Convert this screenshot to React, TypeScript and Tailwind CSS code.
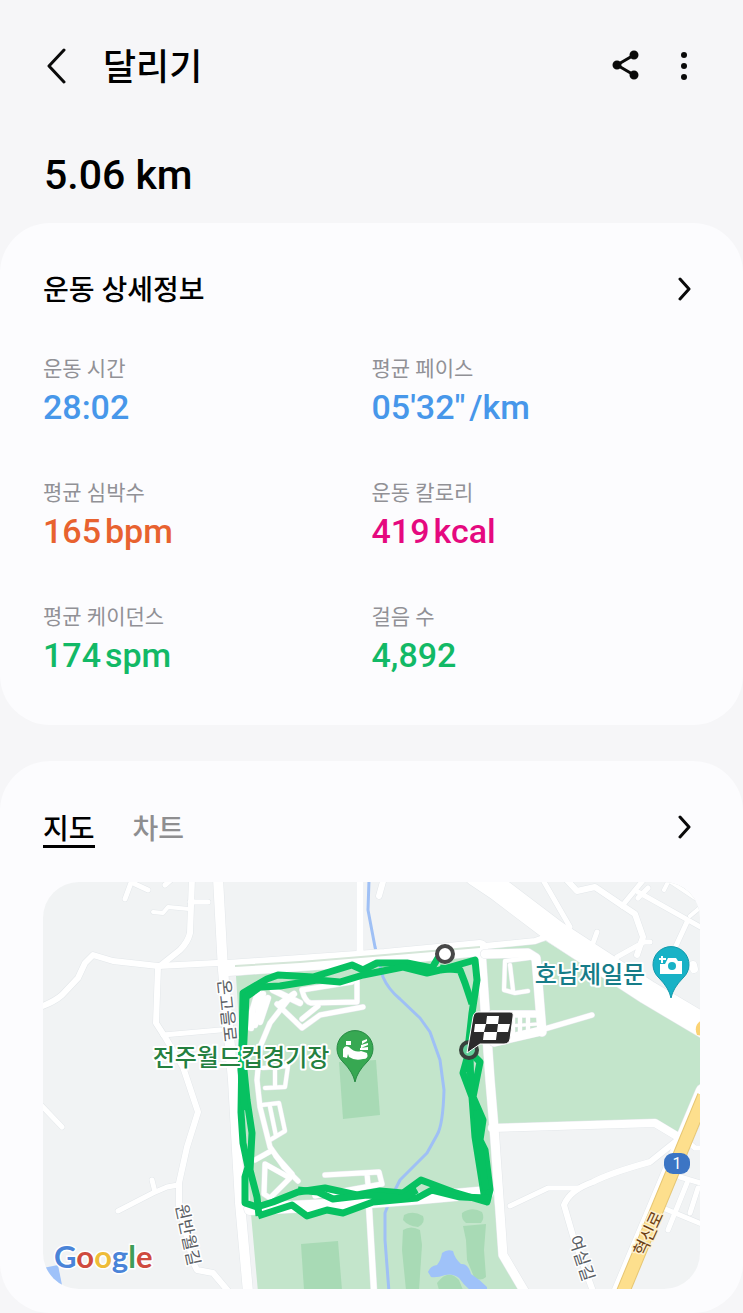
import { useState } from 'react';

type Road = [d: string, width: number];

interface Stat {
  label: string;
  value: string;
  unit?: string;
  color: string;
}

const stats: Stat[] = [
  { label: '운동 시간', value: '28:02', color: 'text-[#4797ea]' },
  { label: '평균 페이스', value: '05\'32"', unit: '/km', color: 'text-[#4797ea]' },
  { label: '평균 심박수', value: '165', unit: 'bpm', color: 'text-[#e8622f]' },
  { label: '운동 칼로리', value: '419', unit: 'kcal', color: 'text-[#e5097f]' },
  { label: '평균 케이던스', value: '174', unit: 'spm', color: 'text-[#12b966]' },
  { label: '걸음 수', value: '4,892', color: 'text-[#12b966]' },
];

const roads: Road[] = [
  // west side
  ['M218 878 L223 970 L233 1080 L240 1203 L248 1292', 10],
  ['M192 878 L190 933 Q188 942 180 950 L160 966', 6],
  ['M190 902 L208 902', 5],
  ['M189 909 L168 907 L163 913 L153 912', 4],
  ['M132 880 L125 899 M135 884 L148 890 M165 885 L172 879', 5],
  ['M40 1007 Q54 1002 62 995 L78 978 L85 963 L93 955 L113 961 L158 966 L217 963', 6],
  ['M158 967 L156 1023 L165 1037 L183 1067 L198 1112 L187 1147 L179 1183 L179 1205 L193 1262 L197 1270 L213 1273 L229 1292', 6],
  ['M163 1035 L220 1030', 5],
  ['M178 1185 L167 1187 L153 1193 L118 1211 M152 1180 L155 1192', 5],
  ['M40 1104 L62 1127', 5],
  // north
  ['M360 878 L360 951', 7],
  ['M384 878 L379 896', 6],
  ['M476 874 L497 888 L555 932 L647 992 L706 1027', 24],
  ['M543 880 L570 927', 5],
  ['M565 878 L577 891 L595 887 L620 904 L635 914 L643 937 L637 955', 6],
  ['M597 932 L593 943 M617 957 L644 942 M650 942 L641 942', 5],
  ['M645 878 L622 906', 5],
  ['M638 892 L704 929 M648 888 L638 898 M687 922 L675 948', 5],
  ['M670 878 L664 890 M668 880 L704 904 M690 916 L702 906', 4],
  ['M693 965 L694 969', 8],
  // avenue along the top of the park
  ['M228 968 L300 963 L385 957 L480 948', 16],
  ['M475 947 L535 941 L546 937', 6],
  // east
  ['M481 950 L490 1080 L495 1140 L503 1255 L526 1294', 9],
  ['M492 1128 L655 1123 L680 1138', 8],
  ['M680 1138 L650 1162 Q610 1173 593 1182 Q570 1190 564 1205 L573 1236 L594 1294', 6],
  ['M578 1188 L548 1188 L510 1206', 5],
  ['M680 1177 L704 1184 M663 1208 L704 1225 M687 1183 L668 1230 M698 1188 L690 1213', 5],
  ['M688 1142 L695 1148 L704 1148', 5],
  ['M704 1092 L620 1292', 17],
];

const lots: Road[] = [
  ['M485 954 L528 953 L536 958 L542 1032', 9],
  ['M492 1014 L538 1014', 7],
  ['M494 1042 L541 1031', 9],
  ['M494 1027 L538 1024', 3],
  ['M494 1018 V1038 M504 1014 V1036 M513 1014 V1035 M520 1014 V1034 M528 1014 V1034', 4],
  ['M541 1030 L592 1015', 5],
  ['M529 958 L505 961 L504 990 L515 993 L528 991 M510 965 L513 990', 4],
  ['M258 992 L252 1012 L251 1028 M263 994 L255 1025 M268 998 L260 1022', 6],
  ['M273 990 L300 1003 M280 1004 L294 994', 6],
  ['M357 980 L357 1002 L311 1003 Q305 1002 302 990 L352 982', 5],
  ['M363 1007 L320 1015 L302 1028 L277 1004 M302 1019 L318 1006', 5],
  ['M292 995 L270 1023 L260 1047 L257 1080 L260 1107 L270 1147 L284 1167 L298 1181', 5],
  ['M263 1068 L288 1066 L285 1087 L265 1088 M275 1068 V1086', 4],
  ['M262 1105 L279 1103 L285 1131 L270 1140 M270 1107 L276 1136', 4],
  ['M255 1160 L271 1151 M265 1164 L290 1178 L270 1198 L264 1194 Z M276 1156 L292 1174', 5],
  ['M325 1175 L379 1172 L382 1184 L315 1196 M367 1173 L368 1185', 5],
  ['M250 1209 L330 1205 L410 1199 L488 1192', 12],
  ['M369 1207 L374 1292', 6],
];

const route = [
  'M445 954 L438 958 L432 968 L407 963 L377 963 L363 970 L352 965 L313 977 L278 975 L267 979 L243 993 L242 1050 L241 1112 L243 1143 L248 1167 L245 1177 L245 1203 L257 1207',
  'M458 968 L440 970 L427 973 L403 967 L363 975 L340 982 L317 980 L280 986 L260 987 L246 997 L243 1060 L247 1100 L252 1133 L250 1170 L257 1197 L259 1216',
  'M244 1010 L241 1070 L245 1110',
  'M440 970 L475 960 L477 980 L472 1013 L468 1049',
  'M440 968 L460 970 L465 983 L472 1004',
  'M468 1055 L463 1073 L472 1097 L475 1137 L485 1200',
  'M473 1055 L480 1062 L473 1097 L483 1120 L480 1140 L485 1150 L490 1190 L487 1202 L453 1192 L421 1180 L403 1193 L380 1191 L357 1195 L325 1188 L298 1192 L273 1202 L257 1207',
  'M470 1056 L471 1090 M477 1110 L480 1150 L486 1190',
  'M488 1198 L460 1197 L432 1190 L417 1198 L373 1202 L343 1213 L327 1210 L307 1216 L292 1205 L258 1216',
  'M417 1190 L403 1198 L367 1195 L333 1199 L318 1192 L298 1190',
];

const googleLetters = [
  ['G', '#4a84d8'],
  ['o', '#cf4b3f'],
  ['o', '#eebc38'],
  ['g', '#4a84d8'],
  ['l', '#3e9d58'],
  ['e', '#cf4b3f'],
];

function RoadLayer({ items }: { items: Road[] }) {
  return (
    <g fill="none" strokeLinecap="round" strokeLinejoin="round">
      {items.map(([d, width]) => (
        <path key={d} d={d} stroke="#e3e7ea" strokeWidth={width + 1} />
      ))}
      {items.map(([d, width]) => (
        <path key={d} d={d} stroke="#ffffff" strokeWidth={width} />
      ))}
    </g>
  );
}

function RouteMap() {
  return (
    <svg
      viewBox="43 882 657 407"
      role="img"
      aria-label="지도"
      className="block h-auto w-full rounded-[36px] bg-[#f1f3f4] font-['Noto_Sans_CJK_KR',sans-serif]"
    >
      {/* parks */}
      <g fill="#c3e5cb">
        <path d="M236 976 L480 950 L494 1200 L503 1255 L526 1292 L258 1292 L250 1203 Z" />
        <path d="M480 949 L546 941 L646 1005 L702 1036 L702 1098 L680 1138 L655 1124 L494 1130 Z" />
      </g>
      <g fill="#a8dab5">
        <path d="M339 1062 L376 1060 L380 1115 L343 1119 Z" />
        <path d="M301 1244 L338 1241 L342 1290 L304 1290 Z" />
        <path d="M404 1215 Q413 1210 423 1216 Q426 1223 418 1227 Q408 1226 403 1220 Z" />
        <path d="M403 1230 Q411 1225 420 1230 L422 1245 L419 1290 L406 1290 L402 1250 Z" />
        <path d="M462 1213 Q472 1206 482 1212 Q485 1218 481 1223 L466 1223 Q461 1219 462 1213 Z" />
        <path d="M463 1226 L486 1224 L484 1250 L486 1277 Q480 1282 474 1277 L467 1260 L466 1240 Z" />
        <path d="M437 1283 Q448 1268 459 1280 L463 1290 L439 1290 Z" />
      </g>
      <g fill="#9fc2f9">
        <path d="M428 1272 Q430 1266 437 1265 Q441 1260 442 1253 Q447 1249 453 1251 Q455 1259 461 1264 Q468 1263 471 1274 Q479 1279 487 1287 L487 1290 L470 1290 Q463 1284 459 1278 Q453 1273 445 1275 Q437 1278 431 1277 Z" />
        <path d="M43 1268 L58 1265 L63 1290 L43 1290 Z" />
      </g>
      <g fill="none" stroke="#9fc0f5" strokeWidth="3" strokeLinejoin="round">
        <path d="M369 880 L368 910 L375 947 L383 977 Q388 989 400 999 L420 1018 L430 1032 L440 1060 L444 1090 Q443 1125 437 1135 L427 1153 L400 1180 L390 1200 L385 1213 L385 1240 L389 1292" />
      </g>

      <RoadLayer items={roads} />
      <RoadLayer items={lots} />
      <path d="M235 966 L300 962 L385 955 L480 947" fill="none" stroke="#d5e6d8" strokeWidth="2" />
      <path d="M704 1096 L623 1292" fill="none" stroke="#e6c673" strokeWidth="14" />
      <path d="M704 1096 L623 1292" fill="none" stroke="#fddf8d" strokeWidth="12" />
      <path d="M702 1020 Q693 1025 697 1035 L702 1036 Z" fill="#fbd374" />

      <g fill="none" stroke="#07c161" strokeWidth="7" strokeLinejoin="round">
        {route.map((d) => (
          <path key={d} d={d} />
        ))}
      </g>

      {/* start and finish */}
      <circle cx="445" cy="954" r="8" fill="#fff" stroke="#484848" strokeWidth="4" />
      <circle cx="469" cy="1050" r="8" fill="#62d09a" stroke="#37423c" strokeWidth="4" />
      <path
        d="M478 1012 H510 Q514 1012 513 1017 L510 1039 Q509 1044 504 1044 H480 L467 1053 L473 1017 Q474 1012 478 1012 Z"
        fill="#2b2b2b"
        stroke="#fff"
        strokeWidth="1"
      />
      <path
        d="M487 1016 H499 L498 1024 H510 L508 1032 H497 L496 1040 H483 L484 1032 H474 L475 1024 H486 Z"
        fill="#fff"
      />
      <path d="M486 1024 H498 L497 1032 H484 Z" fill="#2b2b2b" />

      {/* stadium pin */}
      <path
        d="M355 1082 Q353 1072 343 1062 A18 18 0 1 1 367 1062 Q357 1072 355 1082 Z"
        fill="#37a852"
        stroke="#278a43"
        strokeWidth="1"
      />
      <g fill="#fff">
        <path d="M343 1049 Q345 1045 349 1047 Q355 1053 361 1051 L367 1053 Q369 1059 363 1059 Q355 1061 349 1057 L348 1054 L347 1058 L343 1057 Z" />
        <path d="M346 1041 H351 V1045 H346 Z M362 1041 L367 1039 V1041 L362 1044 Z M361 1045 L368 1043 V1045 L361 1048 Z M360 1048 L368 1047 V1050 L360 1050 Z" />
      </g>

      {/* attraction pin */}
      <path
        d="M671 998 Q669 988 659 978 A18 18 0 1 1 683 978 Q673 988 671 998 Z"
        fill="#18b2c6"
        stroke="#1299ab"
        strokeWidth="1"
      />
      <path d="M660 964 H665 L668 958 H676 L678 961 H682 V974 H660 Z" fill="#fff" />
      <circle cx="672" cy="966" r="4" fill="#18b2c6" />
      <path d="M659 959 H666 M662 956 V963" stroke="#18b2c6" strokeWidth="4" />
      <path d="M659 959 H666 M662 956 V963" stroke="#fff" strokeWidth="2" />

      <rect x="664" y="1153" width="26" height="21" rx="9" fill="#3c75c4" />
      <text x="677" y="1169" textAnchor="middle" fontSize="16" fill="#fff" className="font-[Roboto,sans-serif]">
        1
      </text>

      <g textAnchor="middle" stroke="#fff" strokeWidth="4" strokeLinejoin="round" paintOrder="stroke">
        <text x="241" y="1066" fontSize="24" fontWeight="500" fill="#24803f">
          전주월드컵경기장
        </text>
        <text x="590" y="983" fontSize="24" fontWeight="500" fill="#167c88">
          호남제일문
        </text>
        <g fontSize="17" strokeWidth="3" fill="#5b6065">
          <text transform="translate(221 1011) rotate(84)">온고을로</text>
          <text transform="translate(182 1236) rotate(78)">원반월길</text>
          <text transform="translate(576 1260) rotate(72)">여실길</text>
          <text transform="translate(654 1236) rotate(-65)" fill="#6b3d12" stroke="#fdf0cc">
            혁신로
          </text>
        </g>
      </g>

      <text
        x="54"
        y="1268"
        fontSize="31"
        stroke="#fff"
        strokeWidth="3"
        paintOrder="stroke"
        className="font-[Lato,sans-serif] font-bold"
      >
        {googleLetters.map(([letter, fill], index) => (
          <tspan key={index} fill={fill}>
            {letter}
          </tspan>
        ))}
      </text>
    </svg>
  );
}

function ChevronRight() {
  return (
    <svg viewBox="0 0 14 24" className="h-6 w-[14px]" fill="none" stroke="#0a0a0a" strokeWidth="3" strokeLinecap="round" strokeLinejoin="round">
      <path d="M2 2 L11 12 L2 22" />
    </svg>
  );
}

export default function App() {
  const [tab, setTab] = useState<'map' | 'chart'>('map');

  const tabClass = (active: boolean) =>
    active
      ? 'border-b-[3px] border-black text-[28px] leading-[30px] font-medium text-black'
      : 'border-b-[3px] border-transparent text-[28px] leading-[30px] font-medium text-[#8e8e90]';

  return (
    <div className="bg-[#f6f6f8] font-[Roboto,'Noto_Sans_CJK_KR',sans-serif] text-black">
      <header className="flex h-[132px] items-center px-[46px]">
        <button type="button" aria-label="뒤로" className="mr-[35px]">
          <svg viewBox="0 0 22 36" className="h-9 w-[22px]" fill="none" stroke="#0a0a0a" strokeWidth="3" strokeLinecap="round" strokeLinejoin="round">
            <path d="M18 2 L3 18 L18 34" />
          </svg>
        </button>
        <h1 className="pt-1 text-[36px] leading-10 font-medium">달리기</h1>
        <button type="button" aria-label="공유" className="ml-auto">
          <svg viewBox="0 0 28 32" className="h-8 w-7" fill="#0a0a0a" stroke="#0a0a0a" strokeWidth="3">
            <path d="M22 5 L5 15 L22 25" fill="none" />
            <circle cx="22" cy="5" r="3" />
            <circle cx="5" cy="15" r="3" />
            <circle cx="22" cy="25" r="3" />
          </svg>
        </button>
        <button type="button" aria-label="더보기" className="mr-[9px] ml-10">
          <svg viewBox="0 0 8 30" className="h-[30px] w-2" fill="#0a0a0a">
            <circle cx="4" cy="4" r="3" />
            <circle cx="4" cy="15" r="3" />
            <circle cx="4" cy="26" r="3" />
          </svg>
        </button>
      </header>

      <p className="px-11 pt-[19px] pb-6 text-[41px] leading-[48px] font-medium">5.06 km</p>

      <main>
        <section className="rounded-[50px] bg-[#fcfcfe] px-[43px] pt-[46px] pb-[49px]">
          <div className="flex items-center justify-between pr-2">
            <h2 className="pt-1 text-[28px] leading-9 font-medium">운동 상세정보</h2>
            <button type="button" aria-label="운동 상세정보 보기">
              <ChevronRight />
            </button>
          </div>
          <dl className="mt-[43px] grid grid-cols-2 gap-y-12">
            {stats.map((stat) => (
              <div key={stat.label}>
                <dt className="text-[21px] leading-[34px] text-[#919196]">{stat.label}</dt>
                <dd className={`flex gap-1 text-[34px] leading-[42px] font-medium ${stat.color}`}>
                  <span>{stat.value}</span>
                  {stat.unit && <span>{stat.unit}</span>}
                </dd>
              </div>
            ))}
          </dl>
        </section>

        <section className="mt-9 rounded-[50px] bg-[#fcfcfe] px-[43px] pt-[54px] pb-6">
          <div className="flex items-start justify-between pr-2">
            <div role="tablist" className="flex gap-[38px]">
              <button type="button" role="tab" aria-selected={tab === 'map'} onClick={() => setTab('map')} className={tabClass(tab === 'map')}>
                지도
              </button>
              <button type="button" role="tab" aria-selected={tab === 'chart'} onClick={() => setTab('chart')} className={tabClass(tab === 'chart')}>
                차트
              </button>
            </div>
            <button type="button" aria-label="지도 보기">
              <ChevronRight />
            </button>
          </div>
          <div className="mt-[34px]">
            <RouteMap />
          </div>
        </section>
      </main>
    </div>
  );
}
